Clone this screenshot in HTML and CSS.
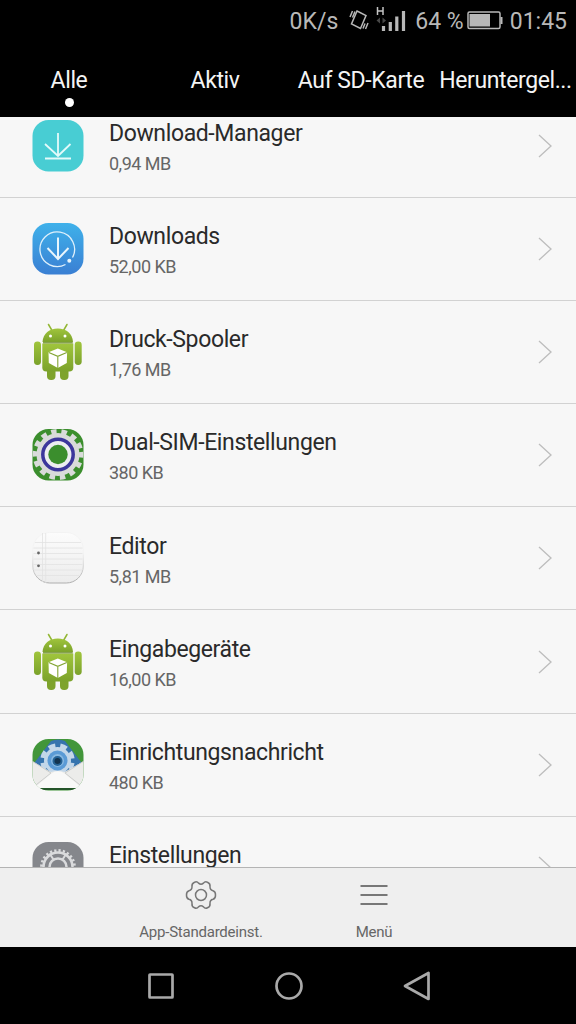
FILE: index.html
```html
<!DOCTYPE html>
<html lang="de">
<head>
    <meta charset="UTF-8">
    <meta name="viewport" content="width=device-width, initial-scale=1.0">
    <title>Apps</title>
    <link rel="stylesheet" href="styles.css">
</head>
<body>
    <svg class="defs" width="0" height="0">
        <defs>
            <linearGradient id="blue" x1="0" y1="0" x2="0" y2="1">
                <stop offset="0" stop-color="#3fb1ea"/>
                <stop offset="1" stop-color="#3a7fd3"/>
            </linearGradient>
            <linearGradient id="droid" x1="0" y1="0" x2="0" y2="1">
                <stop offset="0" stop-color="#a0c53c"/>
                <stop offset="1" stop-color="#7ba22b"/>
            </linearGradient>
            <linearGradient id="paper" x1="0" y1="0" x2="0" y2="1">
                <stop offset="0" stop-color="#fcfcfc"/>
                <stop offset="1" stop-color="#ececec"/>
            </linearGradient>
            <linearGradient id="paperEdge" x1="0" y1="0" x2="0" y2="1">
                <stop offset="0.4" stop-color="#f3f3f3"/>
                <stop offset="1" stop-color="#adadad"/>
            </linearGradient>
            <clipPath id="tile"><rect x="4.500" y="4" width="51" height="51.500" rx="16"/></clipPath>
            <symbol id="android" viewBox="0 0 60 60">
                <path d="M20.500 2.500l3.500 6M39 2.500l-3.500 6" stroke="#93b735" stroke-width="1.500" stroke-linecap="round"/>
                <path d="M14.500 20C15 11.500 21.500 6.500 29.800 6.500S44.500 11.500 45 20z" fill="url(#droid)"/>
                <circle cx="22.500" cy="14" r="1.500" fill="#fff"/>
                <circle cx="37" cy="14" r="1.500" fill="#fff"/>
                <rect x="19" y="40" width="8.500" height="18" rx="4" fill="#7ea32c"/>
                <rect x="32" y="40" width="8.500" height="18" rx="4" fill="#7ea32c"/>
                <rect x="6" y="19.500" width="7" height="23.500" rx="3.400" fill="url(#droid)"/>
                <rect x="46.700" y="19.500" width="7" height="23.500" rx="3.400" fill="url(#droid)"/>
                <path d="M14.300 21.500h31v24a4 4 0 0 1-4 4h-23a4 4 0 0 1-4-4z" fill="url(#droid)"/>
                <path d="M15 20.800h29.700" stroke="#6b8c26" stroke-width="1.200"/>
                <path d="M29.800 26.500l9.300 3.800-.3 10.700-9 5-9-5-.3-10.700z" fill="#fff"/>
                <path d="M20.800 30.500l9 3.800 9-3.800M29.800 34.300V46" fill="none" stroke="#83a535" stroke-width="1.100"/>
            </symbol>
            <symbol id="arrow" viewBox="0 0 14 24">
                <path d="M1 1l12 11L1 23" fill="none" stroke="#bdbdbd" stroke-width="1.300"/>
            </symbol>
        </defs>
    </svg>

    <div class="status-bar">
        <span class="speed">0K/s</span>
        <svg class="vibrate" width="20" height="22" viewBox="0 0 20 22">
            <g fill="none" stroke="#b8b8b8" stroke-width="1.500">
                <path d="M8 2l9 4.500-5.500 13-9-4.500z"/>
                <path d="M1 8l2.500-6M3.500 8.500L6 2.500M14 19.500l2-5M16.500 20l2.500-6"/>
            </g>
        </svg>
        <svg class="signal" width="31" height="26" viewBox="0 0 31 26">
            <path d="M1.500 1v8M7 1v8M1.500 5h5.500" stroke="#c4c4c4" stroke-width="1.500"/>
            <path d="M4 11.500v6l-3.500-3zM6.500 11.500v6l3.500-3z" fill="#484848"/>
            <path d="M7.500 25v-5M14.300 25v-9M20.800 25v-14.500M27.500 25V5" stroke="#b8b8b8" stroke-width="3.200"/>
        </svg>
        <span class="percent">64 %</span>
        <svg class="battery" width="36" height="19" viewBox="0 0 36 19">
            <rect x="1" y="1" width="32" height="16.500" rx="1.500" fill="none" stroke="#b8b8b8" stroke-width="1.500"/>
            <rect x="2.500" y="3" width="20.500" height="12.500" fill="#b8b8b8"/>
            <path d="M34.500 6v7" stroke="#b8b8b8" stroke-width="2"/>
        </svg>
        <span class="clock">01:45</span>
    </div>

    <div class="tabs">
        <div class="tab active">Alle</div>
        <div class="tab">Aktiv</div>
        <div class="tab">Auf SD-Karte</div>
        <div class="tab">Heruntergel...</div>
    </div>

    <div class="content">
        <div class="list">
            <div class="row">
                <svg class="icon" viewBox="0 0 60 60">
                    <rect x="4.500" y="4" width="51" height="51.500" rx="16" fill="#48cdd3"/>
                    <path d="M30 17v22.500M17 28l13 12 12.500-12M17 42.500h26" fill="none" stroke="#e4fafa" stroke-width="1.800"/>
                </svg>
                <div class="text">
                    <div class="name">Download-Manager</div>
                    <div class="size">0,94 MB</div>
                </div>
                <svg class="chevron"><use href="#arrow"/></svg>
            </div>
            <div class="row">
                <svg class="icon" viewBox="0 0 60 60">
                    <rect x="4.500" y="4" width="51" height="51.500" rx="16" fill="url(#blue)"/>
                    <path d="M37.500 45.500A17.300 17.300 0 1 1 44.500 38.500" fill="none" stroke="#dff0fb" stroke-width="1.300"/>
                    <path d="M30 18.500v21M19.500 29l10.500 11 10.500-11" fill="none" stroke="#e9f5fc" stroke-width="2"/>
                    <circle cx="41.300" cy="41.800" r="2" fill="#e9f5fc"/>
                </svg>
                <div class="text">
                    <div class="name">Downloads</div>
                    <div class="size">52,00 KB</div>
                </div>
                <svg class="chevron"><use href="#arrow"/></svg>
            </div>
            <div class="row">
                <svg class="icon" viewBox="0 0 60 60"><use href="#android"/></svg>
                <div class="text">
                    <div class="name">Druck-Spooler</div>
                    <div class="size">1,76 MB</div>
                </div>
                <svg class="chevron"><use href="#arrow"/></svg>
            </div>
            <div class="row">
                <svg class="icon" viewBox="0 0 60 60">
                    <rect x="4.500" y="4" width="51" height="51.500" rx="16" fill="#3b8e2d"/>
                    <g clip-path="url(#tile)">
                        <circle cx="30" cy="29.500" r="21.500" fill="#d9dbda"/>
                        <circle cx="30" cy="29.500" r="23" fill="none" stroke="#d9dbda" stroke-width="5" stroke-dasharray="5.500 4.822" transform="rotate(-6 30 29.500)"/>
                        <circle cx="30" cy="29.500" r="15.200" fill="#eceef0" stroke="#3c379c" stroke-width="3.500"/>
                        <circle cx="30" cy="29.500" r="9.700" fill="#3b8e2d"/>
                    </g>
                </svg>
                <div class="text">
                    <div class="name">Dual-SIM-Einstellungen</div>
                    <div class="size">380 KB</div>
                </div>
                <svg class="chevron"><use href="#arrow"/></svg>
            </div>
            <div class="row">
                <svg class="icon" viewBox="0 0 60 60">
                    <rect x="4.800" y="4.500" width="50.500" height="50.500" rx="17" fill="url(#paper)" stroke="url(#paperEdge)"/>
                    <path d="M17.700 5v50M14.500 5v49" stroke="#e2e2e2" stroke-width=".8"/>
                    <path d="M7 14.500h46M5.500 20h49M5.500 25.500h49M5.500 31h49M5.500 36.500h49M5.500 42h49M9 47.500h42" stroke="#e2e2e2" stroke-width=".8"/>
                    <circle cx="10.500" cy="25" r="1.400" fill="#666"/>
                    <circle cx="10.500" cy="37.800" r="1.400" fill="#666"/>
                </svg>
                <div class="text">
                    <div class="name">Editor</div>
                    <div class="size">5,81 MB</div>
                </div>
                <svg class="chevron"><use href="#arrow"/></svg>
            </div>
            <div class="row">
                <svg class="icon" viewBox="0 0 60 60"><use href="#android"/></svg>
                <div class="text">
                    <div class="name">Eingabegeräte</div>
                    <div class="size">16,00 KB</div>
                </div>
                <svg class="chevron"><use href="#arrow"/></svg>
            </div>
            <div class="row">
                <svg class="icon" viewBox="0 0 60 60">
                    <rect x="4.500" y="4" width="51" height="51.500" rx="16" fill="#42963a"/>
                    <g clip-path="url(#tile)">
                        <path d="M7 27L23 6q7-3 14 0l16 21v10H7z" fill="#3674ae"/>
                        <circle cx="29.500" cy="25.500" r="13.500" fill="#c3d7e9"/>
                        <circle cx="29.500" cy="25.500" r="15" fill="none" stroke="#c3d7e9" stroke-width="4.500" stroke-dasharray="6.800 4.981" transform="rotate(9 29.500 25.500)"/>
                        <circle cx="29.500" cy="25.500" r="10" fill="#5b9bd6"/>
                        <circle cx="29.500" cy="25.500" r="6.500" fill="#88b9e2"/>
                        <circle cx="29.500" cy="26" r="5" fill="#256396"/>
                        <circle cx="29.500" cy="26" r="3" fill="#12334f"/>
                        <path d="M4 26l19 11q6.500-2 13.500 0L56 26V53H4z" fill="#ececea"/>
                        <path d="M4 26l19 12L6 51.500M56 26L37 38 54 51.500" fill="none" stroke="#c8cac8" stroke-width=".9"/>
                        <path d="M6 53l17.500-14.500q6.500-4.500 13 0L54 53z" fill="#f9f9f8"/>
                        <path d="M8 54h44" stroke="#25552a" stroke-width="2"/>
                    </g>
                </svg>
                <div class="text">
                    <div class="name">Einrichtungsnachricht</div>
                    <div class="size">480 KB</div>
                </div>
                <svg class="chevron"><use href="#arrow"/></svg>
            </div>
            <div class="row">
                <svg class="icon" viewBox="0 0 60 60">
                    <rect x="4.500" y="4" width="51" height="51.500" rx="16" fill="#85878c"/>
                    <circle cx="30" cy="29" r="14.500" fill="none" stroke="#dadbdd" stroke-width="2.500"/>
                    <circle cx="30" cy="29" r="16.500" fill="none" stroke="#dadbdd" stroke-width="2.800" stroke-dasharray="2.200 2.120"/>
                    <circle cx="30" cy="29" r="8.500" fill="none" stroke="#dadbdd" stroke-width="2.500"/>
                    <path d="M25.500 21.500l-4-6M34.500 21.500l4-6" stroke="#dadbdd" stroke-width="2"/>
                </svg>
                <div class="text">
                    <div class="name">Einstellungen</div>
                </div>
                <svg class="chevron"><use href="#arrow"/></svg>
            </div>
        </div>
    </div>

    <div class="toolbar">
        <div class="action">
            <svg width="32" height="32" viewBox="0 0 32 32">
                <g fill="none" stroke="#777" stroke-width="1.500" stroke-linejoin="round">
                    <path d="M13.500 4.200Q16 6.200 18.500 4.200Q20 2 22.500 3.200Q25.500 4.500 25 7.500Q24.800 11 28 11.700Q30.700 12.500 30.500 16Q30.700 19.500 28 20.300Q24.800 21 25 24.500Q25.500 27.500 22.500 28.800Q20 30 18.500 27.800Q16 25.800 13.500 27.800Q12 30 9.500 28.800Q6.500 27.500 7 24.500Q7.200 21 4 20.300Q1.300 19.500 1.500 16Q1.300 12.500 4 11.700Q7.200 11 7 7.500Q6.500 4.500 9.500 3.200Q12 2 13.500 4.200z"/>
                    <circle cx="16" cy="16" r="5.500"/>
                </g>
            </svg>
            <span>App-Standardeinst.</span>
        </div>
        <div class="action">
            <svg width="32" height="32" viewBox="0 0 32 32">
                <path d="M2.500 7h27M2.500 16h27M2.500 25h27" stroke="#777" stroke-width="2"/>
            </svg>
            <span>Menü</span>
        </div>
    </div>

    <div class="nav-bar">
        <svg width="32" height="32" viewBox="0 0 32 32"><rect x="4.500" y="4.500" width="23" height="23" rx=".5"/></svg>
        <svg width="32" height="32" viewBox="0 0 32 32"><circle cx="16" cy="16" r="12.500"/></svg>
        <svg width="32" height="32" viewBox="0 0 32 32"><path d="M27.500 3v26L4 16z"/></svg>
    </div>
</body>
</html>
```
FILE: styles.css
```css
* {
    box-sizing: border-box;
}
body {
    margin: 0;
    width: 576px;
    height: 1024px;
    display: flex;
    flex-direction: column;
    overflow: hidden;
    background-color: #000;
    font-family: Roboto, sans-serif;
}
.defs {
    display: block;
    flex: none;
    height: 0;
}
.status-bar {
    height: 41px;
    flex: none;
    display: flex;
    align-items: center;
    justify-content: flex-end;
    padding: 1px 9px 0 0;
    color: #b8b8b8;
    font-size: 23px;
    white-space: nowrap;
}
.vibrate {
    margin-left: 11px;
    margin-bottom: 2px;
}
.signal {
    margin: 0 8px 4px 7px;
}
.battery {
    margin: 0 7px 2px 3px;
}
.tabs {
    height: 76px;
    flex: none;
    display: grid;
    grid-template-columns: 138px 154px 138px 151px;
    color: #f4f4f4;
    font-size: 23px;
    letter-spacing: -0.400px;
    line-height: 79px;
    text-align: center;
    white-space: nowrap;
}
.tab {
    position: relative;
}
.tab.active::after {
    content: "";
    position: absolute;
    left: 65px;
    top: 57px;
    width: 9px;
    height: 9px;
    border-radius: 50%;
    background-color: #fff;
}
.content {
    height: 750px;
    flex: none;
    overflow: hidden;
    background-color: #f7f7f7;
}
.list {
    margin-top: -22.300px;
}
.row {
    height: 103.170px;
    display: flex;
    align-items: center;
    padding: 0 24px 0 28px;
    border-bottom: 1px solid #d2d2d2;
}
.icon {
    width: 60px;
    height: 60px;
    flex: none;
}
.text {
    flex: 1;
    align-self: flex-start;
    margin-left: 21px;
    padding-top: 24.300px;
    white-space: nowrap;
}
.name {
    color: #2a2a2a;
    font-size: 23px;
    letter-spacing: -0.380px;
    line-height: 30px;
}
.size {
    color: #666;
    font-size: 18px;
    letter-spacing: -0.500px;
    line-height: 26px;
    margin-top: 2px;
}
.chevron {
    width: 14px;
    height: 24px;
}
.toolbar {
    height: 80px;
    flex: none;
    display: flex;
    justify-content: center;
    padding-right: 1px;
    background-color: #efefef;
    border-top: 1px solid #b4b4b4;
}
.action {
    width: 173px;
    display: flex;
    flex-direction: column;
    align-items: center;
    padding-top: 11px;
    color: #666;
    font-size: 15px;
    letter-spacing: -0.230px;
}
.action span {
    line-height: 20px;
    margin-top: 11px;
}
.nav-bar {
    height: 77px;
    flex: none;
    display: flex;
    align-items: center;
    justify-content: center;
    gap: 96px;
    padding-left: 2px;
}
.nav-bar svg {
    fill: none;
    stroke: #a9a9a9;
    stroke-width: 2.700;
    stroke-linejoin: round;
}
```
